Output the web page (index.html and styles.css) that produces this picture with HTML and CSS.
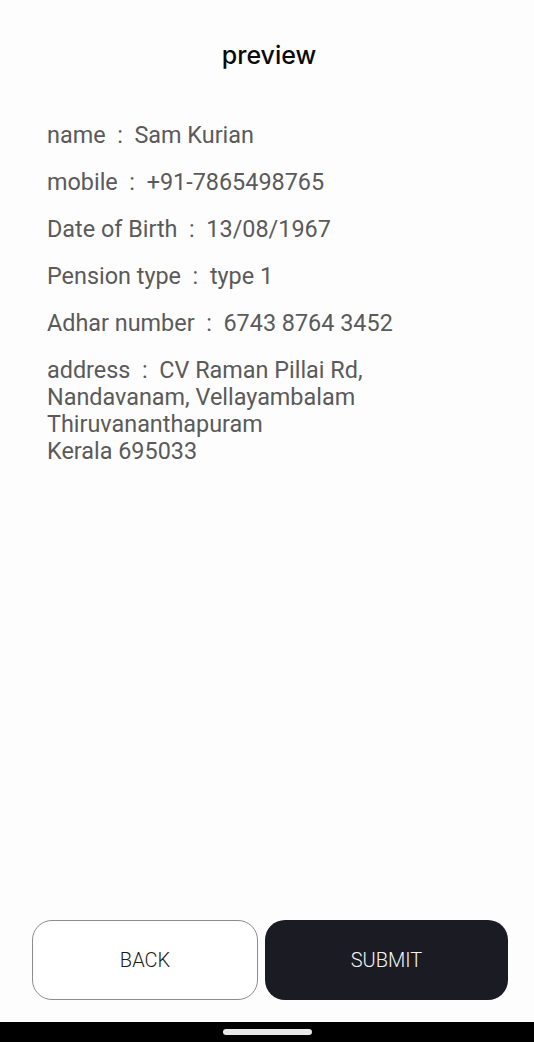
FILE: index.html
```html
<!DOCTYPE html>
<html>
<head>
<meta charset="utf-8">
<link rel="stylesheet" href="styles.css">
</head>
<body>
<div class="screen">
  <header class="title">preview</header>
  <main class="details">
    <div class="row">name&nbsp; :&nbsp; Sam Kurian</div>
    <div class="row">mobile&nbsp; :&nbsp; +91-7865498765</div>
    <div class="row">Date of Birth&nbsp; :&nbsp; 13/08/1967</div>
    <div class="row">Pension type&nbsp; :&nbsp; type 1</div>
    <div class="row">Adhar number&nbsp; :&nbsp; 6743 8764 3452</div>
    <div class="row">address&nbsp; :&nbsp; CV Raman Pillai Rd,<br>Nandavanam, Vellayambalam<br>Thiruvananthapuram<br>Kerala 695033</div>
  </main>
  <div class="actions">
    <button class="btn btn-back">BACK</button>
    <button class="btn btn-submit">SUBMIT</button>
  </div>
  <div class="navbar"><span class="pill"></span></div>
</div>
</body>
</html>
```
FILE: styles.css
```css
html, body { margin: 0; padding: 0; }
body { background: #fefdfe; font-family: Roboto, "Noto Sans", sans-serif; }
.screen { height: 1042px; display: flex; flex-direction: column; }
.title {
  text-align: center;
  font-family: Inter, Roboto, sans-serif;
  font-weight: 500;
  font-size: 25px;
  color: #0a0a0a;
  padding-top: 40px;
  margin-left: 4px;
  line-height: 30px;
}
.details {
  flex: 1;
  padding: 52px 0 0 47px;
  display: flex;
  flex-direction: column;
  gap: 20px;
}
.row {
  font-size: 23.4px;
  line-height: 27px;
  color: #5a5a5a;
}
.actions {
  display: flex;
  gap: 7px;
  padding: 0 26px 22px 32px;
}
.btn {
  height: 80px;
  border-radius: 20px;
  font-family: Roboto, sans-serif;
  font-weight: 300;
  font-size: 20px;
  cursor: pointer;
}
.btn-back {
  width: 226px;
  background: #fff;
  border: 1px solid #8c8c8c;
  color: #1a1a1a;
}
.btn-submit {
  flex: 1;
  background: #1b1b24;
  border: none;
  color: #f4f4f4;
}
.navbar {
  height: 20px;
  background: #000;
  display: flex;
  justify-content: center;
  align-items: center;
}
.pill {
  width: 89px;
  height: 6px;
  border-radius: 3px;
  background: #e8e8e8;
}
```
